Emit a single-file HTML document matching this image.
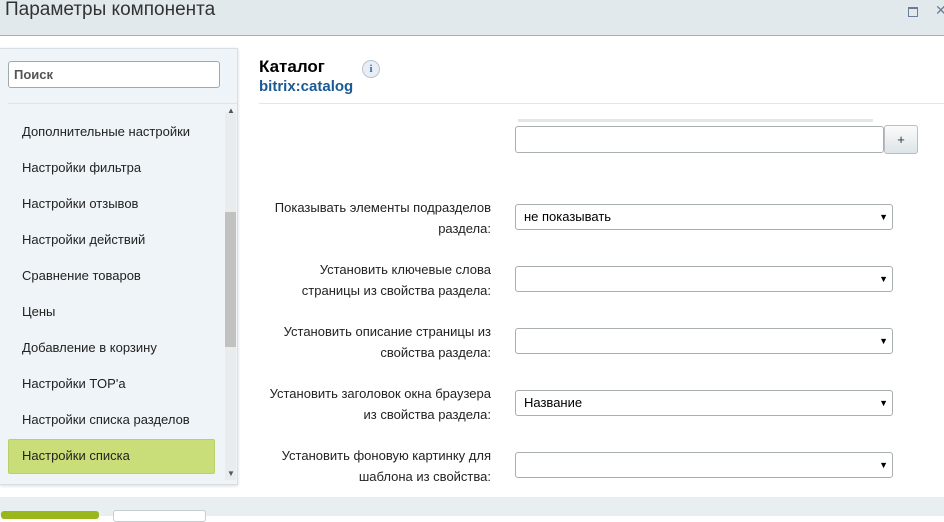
<!DOCTYPE html><html><head><meta charset="utf-8"><style>
body{margin:0;width:944px;height:516px;overflow:hidden;background:#fff;font-family:"Liberation Sans",sans-serif;position:relative}
.hd{position:absolute;left:0;top:0;width:944px;height:35px;background:#e2e9ec;border-bottom:1px solid #a9aeb0}
.hd .t{position:absolute;left:5px;top:-1px;font-size:19px;color:#333}
.side{position:absolute;left:0;top:48px;width:237px;height:435px;background:#eef4f7;border:1px solid #d8dee1;border-left:none;box-shadow:0 1px 3px rgba(0,0,0,.15)}
.srch{position:absolute;left:8px;top:12px;border:1px solid #a2a9ab;border-radius:3px;background:#fff;font-size:13px;font-weight:bold;color:#555;line-height:25px;padding-left:5px;box-sizing:border-box;width:212px;height:27px}
.sep{position:absolute;left:8px;top:54px;width:230px;border-top:1px solid #dde3e6}
.it{position:absolute;left:22px;font-size:13px;color:#222}
.sel{position:absolute;left:8px;top:390px;width:205px;height:33px;background:#c9dd78;border-radius:2px;border:1px solid #bccf6c}
.sb{position:absolute;left:225px;top:63px;width:11px;height:368px;background:#e9eced}
.th{position:absolute;left:225px;top:163px;width:11px;height:135px;background:#c1c1c1}
.foot{position:absolute;left:0;top:497px;width:944px;height:19px;background:#e9eef0}
.lab{position:absolute;right:453px;width:240px;text-align:right;font-size:13px;color:#222;line-height:21px}
.inp{position:absolute;left:515px;width:378px;height:26px;border:1px solid #a9aeb0;border-radius:3px;background:#fff;box-sizing:border-box;font-size:13px;line-height:24px;padding-left:8px;color:#000}
.dd:after{content:"▼";position:absolute;right:4px;top:0;font-size:9px}
</style></head><body>
<div class="hd"><div class="t">Параметры компонента</div>
<div style="position:absolute;left:908px;top:7px;width:8px;height:7px;border:1px solid #6a7f95;border-top-width:2px"></div>
<div style="position:absolute;left:935px;top:3px;font-size:14px;line-height:14px;color:#6a7f95">✕</div></div>
<div class="side">
<div class="srch">Поиск</div><div class="sep"></div>
<div class="sb"></div><div class="th"></div>
<div style="position:absolute;left:227px;top:57px;font-size:8px;color:#555">▲</div>
<div style="position:absolute;left:227px;top:420px;font-size:8px;color:#555">▼</div>
<div class="sel"></div>
<div class="it" style="top:75px">Дополнительные настройки</div>
<div class="it" style="top:111px">Настройки фильтра</div>
<div class="it" style="top:147px">Настройки отзывов</div>
<div class="it" style="top:183px">Настройки действий</div>
<div class="it" style="top:219px">Сравнение товаров</div>
<div class="it" style="top:255px">Цены</div>
<div class="it" style="top:291px">Добавление в корзину</div>
<div class="it" style="top:327px">Настройки TOP'a</div>
<div class="it" style="top:363px">Настройки списка разделов</div>
<div class="it" style="top:399px">Настройки списка</div>
</div>
<div style="position:absolute;left:259px;top:57px;font-size:17px;font-weight:bold;color:#000">Каталог</div>
<div style="position:absolute;left:259px;top:78px;font-size:15px;font-weight:bold;color:#1a5a96">bitrix:catalog</div>
<div style="position:absolute;left:362px;top:60px;width:16px;height:16px;border-radius:50%;background:#e8eef4;border:1px solid #b8c4cf;color:#2b6fb5;font-size:11px;font-weight:bold;text-align:center;line-height:16px;font-family:'Liberation Serif',serif">i</div>
<div style="position:absolute;left:259px;top:103px;width:685px;border-top:1px solid #e2e6e8"></div>
<div style="position:absolute;left:518px;top:119px;width:355px;height:3px;background:#e4e6e6"></div>
<div class="inp" style="top:126px;height:27px;width:369px"></div>
<div style="position:absolute;left:884px;top:125px;width:34px;height:29px;background:linear-gradient(#fbfcfc,#dde4e7);border:1px solid #b7bfc2;border-radius:3px;box-sizing:border-box;text-align:center;font-size:13px;line-height:27px;color:#333">+</div>
<div class="lab" style="top:197px">Показывать элементы подразделов<br>раздела:</div>
<div class="inp dd" style="top:204px">не показывать</div>
<div class="lab" style="top:259px">Установить ключевые слова<br>страницы из свойства раздела:</div>
<div class="inp dd" style="top:266px"></div>
<div class="lab" style="top:321px">Установить описание страницы из<br>свойства раздела:</div>
<div class="inp dd" style="top:328px"></div>
<div class="lab" style="top:383px">Установить заголовок окна браузера<br>из свойства раздела:</div>
<div class="inp dd" style="top:390px">Название</div>
<div class="lab" style="top:445px">Установить фоновую картинку для<br>шаблона из свойства:</div>
<div class="inp dd" style="top:452px"></div>
<div class="foot"></div>
<div style="position:absolute;left:1px;top:511px;width:98px;height:8px;background:#9bb61a;border-radius:3px"></div>
<div style="position:absolute;left:113px;top:510px;width:91px;height:10px;background:#fff;border:1px solid #c8cdd0;border-radius:3px"></div>
</body></html>
